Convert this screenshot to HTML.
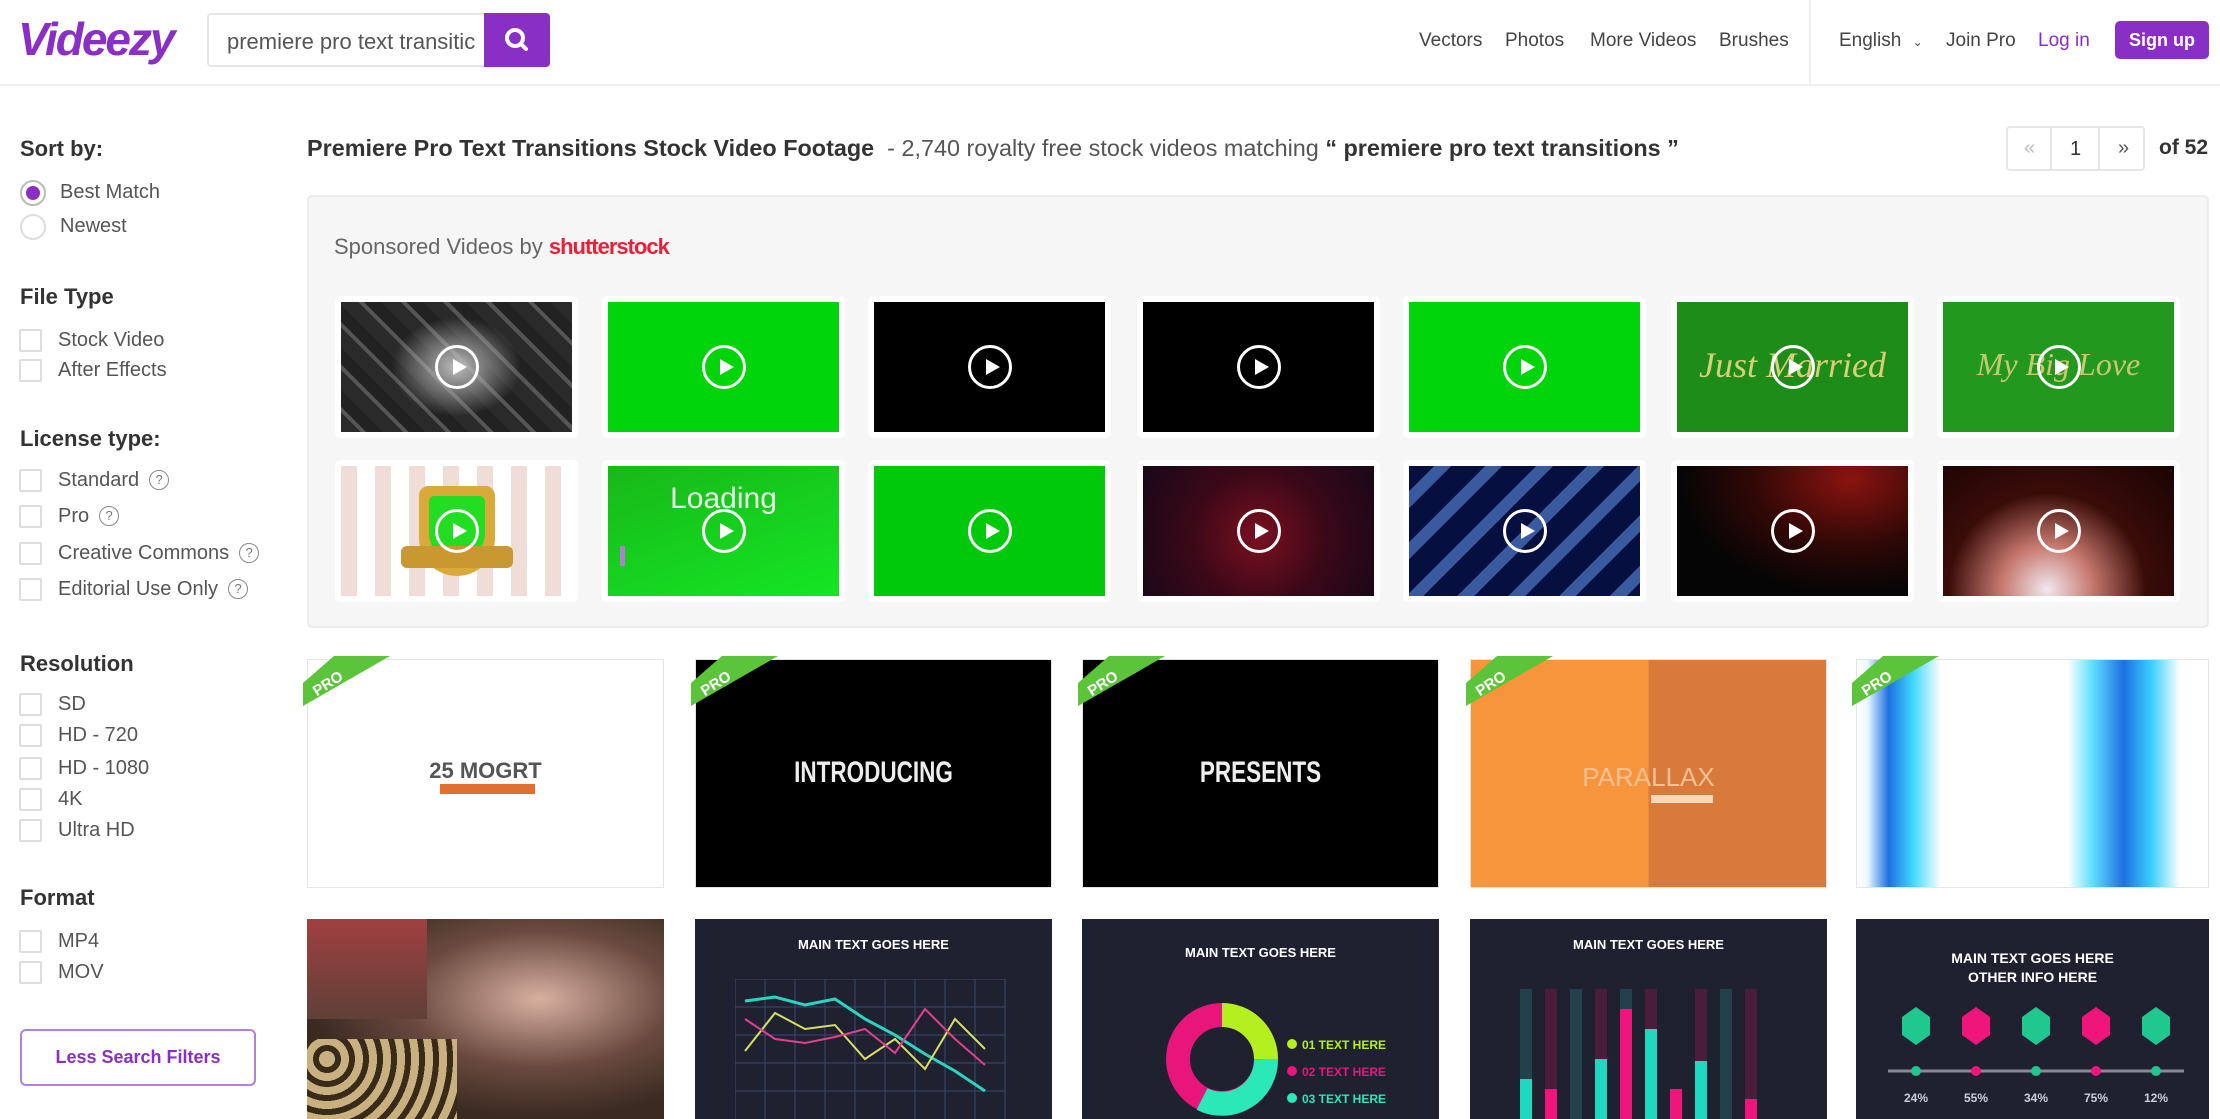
<!DOCTYPE html>
<html><head><meta charset="utf-8">
<style>
*{box-sizing:border-box;margin:0;padding:0}
body{width:2220px;height:1107px;overflow:hidden;background:#fff;font-family:"Liberation Sans",sans-serif;color:#333;position:relative}
.a{position:absolute}
.hdr{left:0;top:0;width:2220px;height:86px;border-bottom:2px solid #eee}
.logo{left:18px;top:12px;font-size:46px;font-weight:bold;font-style:italic;color:#8a2fc6;letter-spacing:-2px}
.search{left:207px;top:13px;width:278px;height:54px;border:2px solid #e6e6e6;border-right:none;border-radius:4px 0 0 4px;font-size:22px;color:#555;padding:14px 0 0 18px;white-space:nowrap;overflow:hidden}
.sbtn{left:484px;top:13px;width:66px;height:54px;background:#8a2fc6;border-radius:0 4px 4px 0}
.nav{top:30px;font-size:19px;color:#444}
.sh{font-size:22px;font-weight:bold;color:#333;left:20px}
.lbl{font-size:20px;color:#555;left:58px}
.cb{left:19px;width:23px;height:23px;border:2px solid #ddd;border-radius:2px}
.q{display:inline-block;width:20px;height:20px;border:1.5px solid #888;border-radius:50%;font-size:13px;text-align:center;line-height:18px;color:#777;margin-left:10px;vertical-align:2px}
.sp{left:307px;top:195px;width:1902px;height:433px;background:#f6f6f6;border:2px solid #ececec;border-radius:5px}
.card{width:243px;height:142px;background:#fff;border-radius:5px;padding:6px}
.card div.i{width:100%;height:100%;position:relative;overflow:hidden}
.play{position:absolute;left:50%;top:50%;width:44px;height:44px;margin:-22px 0 0 -22px;border:3px solid #fff;border-radius:50%}
.play:after{content:"";position:absolute;left:15px;top:11px;border-left:14px solid #fff;border-top:8px solid transparent;border-bottom:8px solid transparent}
.tile{width:357px;height:229px;overflow:hidden;border:1px solid #e4e4e4}
.t2{width:357px;height:200px;overflow:hidden;background:#1f2130;top:919px}
.mt{color:#fff;font-weight:bold;font-size:13px;text-align:center;position:absolute;width:100%}
</style></head><body>
<div class="a hdr"></div>
<div class="a logo">Videezy</div>
<div class="a search">premiere pro text transitic</div>
<div class="a sbtn"><svg width="66" height="54"><circle cx="31" cy="25" r="8" fill="none" stroke="#fff" stroke-width="4"/><line x1="37" y1="31" x2="42" y2="36" stroke="#fff" stroke-width="4" stroke-linecap="round"/></svg></div>
<div class="a nav" style="left:1419px">Vectors</div>
<div class="a nav" style="left:1505px">Photos</div>
<div class="a nav" style="left:1590px">More Videos</div>
<div class="a nav" style="left:1719px">Brushes</div>
<div class="a" style="left:1809px;top:0;width:2px;height:85px;background:#eee"></div>
<div class="a nav" style="left:1839px">English <span style="font-size:12px;margin-left:6px">&#8964;</span></div>
<div class="a nav" style="left:1946px">Join Pro</div>
<div class="a nav" style="left:2038px;color:#8a2fc6">Log in</div>
<div class="a" style="left:2115px;top:21px;width:94px;height:38px;background:#8a2fc6;border-radius:5px;color:#fff;font-weight:bold;font-size:18px;text-align:center;line-height:38px">Sign up</div>

<div class="a sh" style="top:136px">Sort by:</div>
<div class="a" style="left:20px;top:180px;width:26px;height:26px;border:2px solid #bbb;border-radius:50%"><div style="margin:4px;width:14px;height:14px;background:#8a2fc6;border-radius:50%"></div></div>
<div class="a lbl" style="top:181px;left:60px">Best Match</div>
<div class="a" style="left:20px;top:214px;width:26px;height:26px;border:2px solid #ddd;border-radius:50%"></div>
<div class="a lbl" style="top:215px;left:60px">Newest</div>

<div class="a sh" style="top:284px">File Type</div>
<div class="a cb" style="top:329px"></div><div class="a lbl" style="top:329px">Stock Video</div>
<div class="a cb" style="top:359px"></div><div class="a lbl" style="top:359px">After Effects</div>

<div class="a sh" style="top:426px">License type:</div>
<div class="a cb" style="top:469px"></div><div class="a lbl" style="top:469px">Standard<span class="q">?</span></div>
<div class="a cb" style="top:505px"></div><div class="a lbl" style="top:505px">Pro<span class="q">?</span></div>
<div class="a cb" style="top:542px"></div><div class="a lbl" style="top:542px">Creative Commons<span class="q">?</span></div>
<div class="a cb" style="top:578px"></div><div class="a lbl" style="top:578px">Editorial Use Only<span class="q">?</span></div>

<div class="a sh" style="top:651px">Resolution</div>
<div class="a cb" style="top:693px"></div><div class="a lbl" style="top:693px">SD</div>
<div class="a cb" style="top:724px"></div><div class="a lbl" style="top:724px">HD - 720</div>
<div class="a cb" style="top:757px"></div><div class="a lbl" style="top:757px">HD - 1080</div>
<div class="a cb" style="top:788px"></div><div class="a lbl" style="top:788px">4K</div>
<div class="a cb" style="top:819px"></div><div class="a lbl" style="top:819px">Ultra HD</div>

<div class="a sh" style="top:885px">Format</div>
<div class="a cb" style="top:930px"></div><div class="a lbl" style="top:930px">MP4</div>
<div class="a cb" style="top:961px"></div><div class="a lbl" style="top:961px">MOV</div>

<div class="a" style="left:20px;top:1029px;width:236px;height:57px;border:2px solid #b27ee0;border-radius:6px;color:#8a2fc6;font-weight:bold;font-size:18px;text-align:center;line-height:53px">Less Search Filters</div>

<div class="a" style="left:307px;top:135px;font-size:23.4px;color:#555;white-space:nowrap"><b style="color:#333">Premiere Pro Text Transitions Stock Video Footage</b>&nbsp; - 2,740 royalty free stock videos matching <b style="color:#333">“ premiere pro text transitions ”</b></div>
<div class="a" style="left:2006px;top:126px;width:139px;height:45px;border:2px solid #e6e6e6;border-radius:4px;font-size:20px">
<span class="a" style="left:16px;top:9px;color:#bbb">«</span>
<span class="a" style="left:42px;top:-2px;width:50px;height:45px;border-left:2px solid #e6e6e6;border-right:2px solid #e6e6e6"></span>
<span class="a" style="left:62px;top:10px;color:#333">1</span>
<span class="a" style="left:110px;top:9px;color:#555">»</span></div>
<div class="a" style="left:2159px;top:136px;font-size:21px;font-weight:bold">of 52</div>

<div class="a sp"></div>
<div class="a" style="left:334px;top:234px;font-size:22px;color:#666">Sponsored Videos by <span style="color:#e8203a;font-weight:bold;letter-spacing:-1px">shutterstock</span></div>

<div class="a card" style="left:335px;top:296px"><div class="i" style="background:repeating-linear-gradient(45deg,#2a2a2a 0 14px,#555 14px 18px,#222 18px 30px),#333"><div style="position:absolute;left:50px;top:15px;width:130px;height:100px;background:radial-gradient(#bbb,transparent 70%)"></div><div class="play"></div></div></div>
<div class="a card" style="left:602px;top:296px"><div class="i" style="background:#00d40a"><div class="play"></div></div></div>
<div class="a card" style="left:868px;top:296px"><div class="i" style="background:#000"><div class="play"></div></div></div>
<div class="a card" style="left:1137px;top:296px"><div class="i" style="background:#000"><div class="play"></div></div></div>
<div class="a card" style="left:1403px;top:296px"><div class="i" style="background:#00d40a"><div class="play"></div></div></div>
<div class="a card" style="left:1671px;top:296px"><div class="i" style="background:#1e8c18"><div style="position:absolute;width:100%;top:42px;text-align:center;font:italic 36px 'Liberation Serif',serif;color:#d8cf7a">Just Married</div><div class="play"></div></div></div>
<div class="a card" style="left:1937px;top:296px"><div class="i" style="background:#22981e"><div style="position:absolute;width:100%;top:44px;text-align:center;font:italic 32px 'Liberation Serif',serif;color:#c8c870">My Big Love</div><div class="play"></div></div></div>

<div class="a card" style="left:335px;top:460px"><div class="i" style="background:repeating-linear-gradient(90deg,#f0ddd8 0 16px,#fff 16px 34px)"><div style="position:absolute;left:78px;top:20px;width:76px;height:90px;background:#d9a93a;border-radius:10px 10px 40px 40px"></div><div style="position:absolute;left:88px;top:30px;width:56px;height:65px;background:#22dd22;border-radius:6px 6px 30px 30px"></div><div style="position:absolute;left:60px;top:80px;width:112px;height:22px;background:#c89930;border-radius:6px"></div><div class="play"></div></div></div>
<div class="a card" style="left:602px;top:460px"><div class="i" style="background:linear-gradient(160deg,#18b818,#14e624)"><div style="position:absolute;width:100%;top:16px;text-align:center;font-size:30px;color:#e8f8e8">Loading</div><div style="position:absolute;left:12px;top:80px;width:5px;height:20px;background:#b080d0"></div><div class="play"></div></div></div>
<div class="a card" style="left:868px;top:460px"><div class="i" style="background:#00c80a"><div class="play"></div></div></div>
<div class="a card" style="left:1137px;top:460px"><div class="i" style="background:radial-gradient(circle at 50% 55%,#7a1020,#3a0818 50%,#180818)"><div class="play"></div></div></div>
<div class="a card" style="left:1403px;top:460px"><div class="i" style="background:repeating-linear-gradient(135deg,#061040 0 18px,#3a5aa0 18px 30px,#061040 30px 36px)"><div class="play"></div></div></div>
<div class="a card" style="left:1671px;top:460px"><div class="i" style="background:radial-gradient(ellipse at 75% 10%,#8a1410,#300806 40%,#050505 70%)"><div class="play"></div></div></div>
<div class="a card" style="left:1937px;top:460px"><div class="i" style="background:radial-gradient(ellipse at 45% 95%,#f0e8f0,#c87a70 25%,#3a0c08 55%,#180404)"><div class="play"></div></div></div>

<div class="a tile" style="left:307px;top:659px;background:#fff"><div style="position:absolute;width:100%;top:98px;text-align:center;font-weight:bold;font-size:22px;color:#555">25 MOGRT</div><div style="position:absolute;left:132px;top:124px;width:95px;height:10px;background:#e07030"></div></div>
<div class="a tile" style="left:695px;top:659px;background:#000"><div style="position:absolute;width:100%;top:96px;text-align:center;font-weight:bold;font-size:30px;color:#eee;transform:scaleX(.75)">INTRODUCING</div></div>
<div class="a tile" style="left:1082px;top:659px;background:#000"><div style="position:absolute;width:100%;top:96px;text-align:center;font-weight:bold;font-size:30px;color:#eee;transform:scaleX(.75)">PRESENTS</div></div>
<div class="a tile" style="left:1470px;top:659px;background:linear-gradient(90deg,#f7953c 50%,#d87a3c 50%)"><div style="position:absolute;width:100%;top:102px;text-align:center;font-size:26px;color:#f8c090">PARALLAX</div><div style="position:absolute;left:180px;top:135px;width:62px;height:8px;background:#f8d8b8"></div></div>
<div class="a tile" style="left:1856px;top:659px;width:353px;background:linear-gradient(90deg,#fff 0,#eaf8ff 3%,#1e70e0 9%,#40d8ff 16%,#fff 24%,#fff 60%,#60e0ff 67%,#1e70e0 76%,#3ad0ff 84%,#fff 92%,#fff)"></div>
<svg class="a" style="left:300px;top:654px" width="90" height="56"><polygon points="3,29 34,2 90,2 3,52" fill="#5cc43a"/><text x="12" y="38" fill="#fff" font-size="15" font-weight="bold" font-family="Liberation Sans" transform="rotate(-33 22 32)">PRO</text></svg>
<svg class="a" style="left:688px;top:654px" width="90" height="56"><polygon points="3,29 34,2 90,2 3,52" fill="#5cc43a"/><text x="12" y="38" fill="#fff" font-size="15" font-weight="bold" font-family="Liberation Sans" transform="rotate(-33 22 32)">PRO</text></svg>
<svg class="a" style="left:1075px;top:654px" width="90" height="56"><polygon points="3,29 34,2 90,2 3,52" fill="#5cc43a"/><text x="12" y="38" fill="#fff" font-size="15" font-weight="bold" font-family="Liberation Sans" transform="rotate(-33 22 32)">PRO</text></svg>
<svg class="a" style="left:1463px;top:654px" width="90" height="56"><polygon points="3,29 34,2 90,2 3,52" fill="#5cc43a"/><text x="12" y="38" fill="#fff" font-size="15" font-weight="bold" font-family="Liberation Sans" transform="rotate(-33 22 32)">PRO</text></svg>
<svg class="a" style="left:1849px;top:654px" width="90" height="56"><polygon points="3,29 34,2 90,2 3,52" fill="#5cc43a"/><text x="12" y="38" fill="#fff" font-size="15" font-weight="bold" font-family="Liberation Sans" transform="rotate(-33 22 32)">PRO</text></svg>

<div class="a t2" style="left:307px;background:radial-gradient(ellipse at 65% 40%,#d8b0a0,#6a4a40 40%,#3a2a20 70%),#444"><div style="position:absolute;left:0;top:0;width:120px;height:100px;background:linear-gradient(#a04040,#604038)"></div><div style="position:absolute;left:0;top:120px;width:150px;height:80px;background:repeating-radial-gradient(circle at 20px 20px,#c8b080 0 8px,#3a2a18 8px 14px)"></div></div>
<div class="a t2" style="left:695px"><div class="mt" style="top:18px">MAIN TEXT GOES HERE</div>
<svg class="a" style="left:40px;top:60px" width="280" height="140"><g stroke="#3a4a70" stroke-width="1"><path d="M0 0H270M0 28H270M0 56H270M0 84H270M0 112H270M0 0V140M30 0V140M60 0V140M90 0V140M120 0V140M150 0V140M180 0V140M210 0V140M240 0V140M270 0V140"/></g><polyline points="10,22 40,18 70,26 100,20 130,40 160,56 190,75 220,92 250,112" fill="none" stroke="#2ad4c0" stroke-width="3"/><polyline points="10,72 40,34 70,50 100,46 130,80 160,60 190,90 220,40 250,70" fill="none" stroke="#d8e060" stroke-width="2"/><polyline points="10,40 40,60 70,64 100,58 130,50 160,74 190,30 220,60 250,86" fill="none" stroke="#e04090" stroke-width="2"/></svg></div>
<div class="a t2" style="left:1082px"><div class="mt" style="top:26px">MAIN TEXT GOES HERE</div>
<svg class="a" style="left:70px;top:80px" width="280" height="120"><circle cx="70" cy="60" r="44" fill="none" stroke="#e8157a" stroke-width="24"/><path d="M70 16 A44 44 0 0 1 114 60" fill="none" stroke="#b4f020" stroke-width="24"/><path d="M114 60 A44 44 0 0 1 50 100" fill="none" stroke="#2ae8b8" stroke-width="24"/><circle cx="140" cy="45" r="5" fill="#b4f020"/><text x="150" y="50" fill="#b4f020" font-size="12" font-family="Liberation Sans" font-weight="bold">01 TEXT HERE</text><circle cx="140" cy="72" r="5" fill="#e8157a"/><text x="150" y="77" fill="#e8157a" font-size="12" font-family="Liberation Sans" font-weight="bold">02 TEXT HERE</text><circle cx="140" cy="99" r="5" fill="#2ae8b8"/><text x="150" y="104" fill="#2ae8b8" font-size="12" font-family="Liberation Sans" font-weight="bold">03 TEXT HERE</text></svg></div>
<div class="a t2" style="left:1470px"><div class="mt" style="top:18px">MAIN TEXT GOES HERE</div>
<svg class="a" style="left:40px;top:60px" width="280" height="140"><g fill="#24404a"><rect x="10" y="10" width="12" height="130"/><rect x="60" y="10" width="12" height="130"/><rect x="110" y="10" width="12" height="130"/><rect x="210" y="10" width="12" height="130"/></g><g fill="#4a1e3a"><rect x="35" y="10" width="12" height="130"/><rect x="85" y="10" width="12" height="130"/><rect x="135" y="10" width="12" height="130"/><rect x="185" y="10" width="12" height="130"/><rect x="235" y="10" width="12" height="130"/></g><g fill="#1ed8c0"><rect x="10" y="100" width="12" height="40"/><rect x="85" y="80" width="12" height="60"/><rect x="135" y="50" width="12" height="90"/><rect x="185" y="82" width="12" height="58"/></g><g fill="#f0157a"><rect x="35" y="110" width="12" height="30"/><rect x="110" y="30" width="12" height="110"/><rect x="160" y="110" width="12" height="30"/><rect x="235" y="120" width="12" height="20"/></g></svg></div>
<div class="a t2" style="left:1856px;width:353px"><div class="mt" style="top:30px;font-size:14px;line-height:19px">MAIN TEXT GOES HERE<br>OTHER INFO HERE</div>
<svg class="a" style="left:30px;top:88px" width="300" height="110"><g><polygon points="30,0 44,10 44,28 30,38 16,28 16,10" fill="#20c890"/><polygon points="90,0 104,10 104,28 90,38 76,28 76,10" fill="#f0157a"/><polygon points="150,0 164,10 164,28 150,38 136,28 136,10" fill="#20c890"/><polygon points="210,0 224,10 224,28 210,38 196,28 196,10" fill="#f0157a"/><polygon points="270,0 284,10 284,28 270,38 256,28 256,10" fill="#20c890"/></g><line x1="2" y1="64" x2="298" y2="64" stroke="#889" stroke-width="3"/><g fill="#20c890"><circle cx="30" cy="64" r="5"/><circle cx="150" cy="64" r="5"/><circle cx="270" cy="64" r="5"/></g><g fill="#f0157a"><circle cx="90" cy="64" r="5"/><circle cx="210" cy="64" r="5"/></g><g fill="#ccd" font-size="12" font-family="Liberation Sans" font-weight="bold" text-anchor="middle"><text x="30" y="95">24%</text><text x="90" y="95">55%</text><text x="150" y="95">34%</text><text x="210" y="95">75%</text><text x="270" y="95">12%</text></g></svg></div>
</body></html>
